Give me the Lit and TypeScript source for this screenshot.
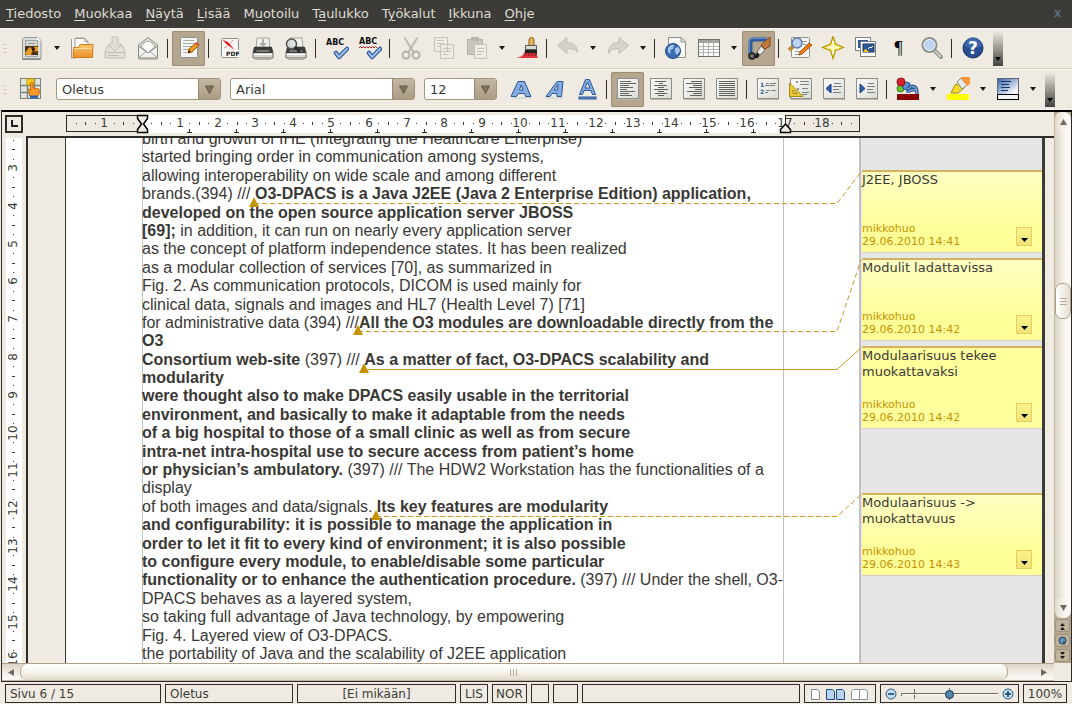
import { LitElement, html, svg, css, nothing } from "lit";
import { customElement } from "lit/decorators.js";

/* ---------- shared icon parts ---------- */
const sheet = (x: number, y: number, w: number, h: number) =>
  svg`<rect x=${x} y=${y} width=${w} height=${h} rx="1" fill="#f6f7f5" stroke="#8d918b"/>`;
const lines = (rows: number[][], color = "#7d817b") =>
  svg`${rows.map(([x, y, w]) => svg`<path d="M${x} ${y}.5h${w}" stroke=${color}/>`)}`;
const frame = svg`<rect x="1.5" y="1.5" width="21" height="20" fill="url(#paper)" stroke="#8b8f88"/><path d="M2 22.5h21" stroke="#bdb7ab"/>`;
const tick = svg`<path d="M11 17l3 4 8-8" fill="none" stroke="#2f5c9e" stroke-width="4.5" stroke-linejoin="round" stroke-linecap="round"/><path d="M11 17l3 4 8-8" fill="none" stroke="#9fc2ee" stroke-width="2" stroke-linecap="round"/>`;
const printer = svg`<path d="M6 2h12l1 11H5z" fill="#f2f3f1" stroke="#a0a39d"/><path d="M4 11h16l2 5v6H2v-6z" fill="#d5d7d3" stroke="#6d706b"/><path d="M3 11h18l1 6H2z" fill="#3b3d3a"/><path d="M6 14h12l1 2H5z" fill="#777a75"/><path d="M3 18.5h18" stroke="#fff"/><path d="M4 23.500h16" stroke="#b5afa3"/>`;
const alignIcon = (rows: number[][]) => svg`${frame}${lines(rows, "#5f635d")}`;

const icons: Record<string, unknown> = {
  newdoc: svg`<path d="M4 1.500h14l3 3v18H2.500V3z" fill="#dcdedb" stroke="#969a94"/><path d="M17 1l4 4h-4z" fill="#fff"/><rect x="5.500" y="4.500" width="12" height="16" fill="#d4d6d2" stroke="#a2a59f"/><path d="M8 7.500h7" stroke="#999"/><rect x="5" y="10" width="13" height="9" fill="#4a3214"/><path d="M5 17q5-8 6-5l1 2q2-5 6-3v4l-6 1-1 3H6z" fill="#e79a2b"/><path d="M12 15v-3l2-1 1 2-1 3z" fill="#2a1a08"/><path d="M2 23.500h19" stroke="#8d8981"/>`,
  open: svg`<path d="M1.500 3v19h4V2h8l3 3v5" fill="#f3f4f2" stroke="#9a9d97"/><path d="M5 2.500h10l3 3V13H5z" fill="#fafafa" stroke="#9a9d97"/><path d="M15 2.500v3h3" fill="none" stroke="#9a9d97"/><path d="M3 21.500l.5-10h5l1.500-3h13l-.5 13z" fill="url(#orange)" stroke="#d07c18"/><path d="M4 12.500h18" stroke="#fbd9a0"/>`,
  save: svg`<g opacity=".45"><path d="M4 10h16l2 6v6H2v-6z" fill="#d8d5ce" stroke="#8c8a84"/><path d="M2.500 16.500h19" stroke="#8c8a84"/><path d="M9 1h6v7h4l-7 7-7-7h4z" fill="#d3d1ca" stroke="#8c8a84"/><path d="M5 19.500h11" stroke="#8c8a84"/></g>`,
  mail: svg`<path d="M2.500 9L12 1.500 21.500 9v13h-19z" fill="#dfe1dd" stroke="#858983"/><path d="M5 10.500q7-11 14 0L12 17z" fill="#f8f8f7" stroke="#9fa29c"/><path d="M2.500 10l9.500 7 9.500-7v12h-19z" fill="#f0f1ef" stroke="#858983"/><path d="M3 21.500l7-6M21 21.500l-7-6" stroke="#a4a7a1"/><path d="M3 23.500h18" stroke="#c9c3b7"/>`,
  edit: svg`${sheet(3.5, 1.5, 17, 20)}${lines([[6, 4, 11], [6, 7, 12], [6, 10, 10], [6, 13, 6], [6, 16, 4]], "#a9aca6")}<path d="M11 17l1-4 7-6 3 2-7 7z" fill="#f59a1b" stroke="#9c4f04"/><path d="M11 17l1-3 2 2z" fill="#1a1a1a"/><path d="M19 7l3 2" stroke="#d9413a" stroke-width="2"/>`,
  pdf: svg`${sheet(3.5, 2.500, 17, 19)}<path d="M5 4l12 11M15 4c-3 4-6 7-9 8" stroke="#e58b8b" fill="none"/><path d="M5 4l5 2 6 7-8-5z" fill="#d8262b"/><rect x="7" y="14" width="14" height="7" fill="#fff"/><text x="8" y="20" font-size="6" font-weight="bold" fill="#111">PDF</text>`,
  print: svg`${printer}<path d="M11 3h2v4h3l-4 4-4-4h3z" fill="#a9aca6"/>`,
  preview: svg`${printer}<circle cx="7.500" cy="8" r="5" fill="#d9dedd" fill-opacity=".8" stroke="#4f524e" stroke-width="1.500"/><path d="M11 11l5 5" stroke="#2b2d2a" stroke-width="3"/>`,
  spell: svg`<text x="1" y="9" font-size="8" font-weight="bold" fill="#111">ABC</text>${tick}`,
  autospell: svg`<text x="1" y="8" font-size="8" font-weight="bold" fill="#111">ABC</text><path d="M1 12l1.500-1.500L4 12l1.500-1.500L7 12l1.500-1.500L10 12l1.500-1.500L13 12l1.500-1.500L16 12l1.500-1.500L19 12" fill="none" stroke="#e01b24"/>${tick}`,
  cut: svg`<g fill="none" stroke="#b4b1a9"><path d="M5 1.500l9 15M19 1.500l-9 15M6 1.500l9 14M18 1.500l-9 14"/><ellipse cx="7" cy="19" rx="3.500" ry="3.500" stroke-width="2"/><ellipse cx="17" cy="19" rx="3.500" ry="3.500" stroke-width="2"/></g>`,
  copy: svg`<g stroke="#c6c3bb" fill="#efece5"><path d="M2.500 1.500h13v14h-13zM8.500 8.500h13v14h-13z"/><path d="M5 4.500h7M5 7.500h7M5 10.500h3M11 12.500h8M11 15.500h8M11 18.500h6"/></g>`,
  paste: svg`<rect x="2.500" y="3.500" width="15" height="15" fill="#c9c6be" stroke="#b5b2aa"/><rect x="6" y="1" width="8" height="4" fill="#b9b6ae"/><path d="M9.500 8.500h12v14h-12z" fill="#efece5" stroke="#c6c3bb"/><path d="M12 12.500h7M12 15.500h7M12 18.500h5" stroke="#c6c3bb"/>`,
  brush: svg`<path d="M14 10V4a2.500 2.500 0 0 1 5 0v6z" fill="#e2b15a" stroke="#8c5c12"/><path d="M10.500 9.500h11v4h-11z" fill="#d9dbd7" stroke="#565955"/><path d="M10 14h12v7H9z" fill="#222"/><path d="M9 17h12l2 5H1q7-1 8-5z" fill="#e0363c"/><path d="M11 16v4M14 16v4M17 16v4M20 16v4" stroke="#661418"/>`,
  undo: svg`<path d="M1.500 9.500L11 1.500v5c7 0 11 4 10.500 10-2-3-5-4-10.500-4v5z" fill="#d4d1c9" stroke="#c4c1b8"/>`,
  redo: svg`<path d="M22.500 9.500L13 1.500v5c-7 0-11 5-10.500 11 2-4 5-5 10.500-5v5z" fill="#d8d5cd" stroke="#bfbcb3"/>`,
  globe: svg`<path d="M4.500 1.500h13l4 4v16h-17z" fill="#fafafa" stroke="#8d918b"/><path d="M17 1.500v4.500h4.500" fill="#ddd" stroke="#8d918b"/><circle cx="9" cy="15" r="7.500" fill="#3b6fb5" stroke="#1e477f"/><path d="M4 12q3-4 6-3l-1 4-3 1 1 4-3-2zM11 12l4-1 1 4-3 4-2-3z" fill="#a9c8ee"/>`,
  table: svg`<rect x="1.500" y="3.500" width="21" height="17" fill="#fff" stroke="#70746e"/><rect x="2" y="4" width="20" height="3" fill="#a3a69f"/><path d="M2 10.500h20M2 13.500h20M2 16.500h20M6.500 7v13M11.500 7v13M16.500 7v13" stroke="#b0b3ad"/>`,
  draw: svg`<path d="M20 3.500H7q-3.500 0-3.500 3.500v12" fill="none" stroke="#2d5a9c" stroke-width="4"/><path d="M20 2.500H7q-4.500 0-4.500 4.500v11" fill="none" stroke="#5f8fd0"/><circle cx="5" cy="20" r="3" fill="#666" stroke="#1c1c1c" stroke-width="1.500"/><path d="M7 22l3-6 3 2-2 4z" fill="#1b1b1b"/><path d="M10 16l4-6 4 4-5 5z" fill="#e5e7e3" stroke="#6a6d68"/><path d="M14 9l9-8v9l-5 3z" fill="#c07a42" stroke="#8c4310"/>`,
  find: svg`${sheet(3.5, 1.5, 18, 20)}${lines([[14, 5, 5], [15, 8, 3], [7, 15, 6], [7, 18, 6]], "#999d96")}<path d="M1 14l5-4" stroke="#c58a35" stroke-width="4"/><circle cx="9" cy="7" r="5" fill="#bcd4f2" stroke="#5c7ba7" stroke-width="1.500"/><path d="M11 19l1-3 9-9 3 2-10 9z" fill="#ef7d14" stroke="#a44b05"/>`,
  navigator: svg`<path d="M12 .5L14.500 8l8 3.500-8 3-2.500 8-2.500-8-8-3 8-3.500z" fill="#fbe96a" stroke="#b99402" stroke-width="1.200"/><path d="M12 5v13M6 11.500h12" stroke="#fffbd0" stroke-width="2"/>`,
  gallery: svg`<rect x="1.500" y="1.500" width="15" height="13" fill="#fff" stroke="#7f837d"/><rect x="4" y="4" width="10" height="8" fill="#2c579b"/><rect x="6.500" y="5.500" width="15" height="15" fill="#fff" stroke="#7f837d"/><rect x="9" y="8" width="11" height="8" fill="#2c579b" stroke="#15345f"/><path d="M9 16l2-3 2 1 2 2z" fill="#f5c518"/><path d="M14 13l2-2 1 1 2-2" stroke="#fff" fill="none"/>`,
  zoom: svg`<circle cx="9.500" cy="9" r="7" fill="#bdd3ef" stroke="#8e928d" stroke-width="2"/><circle cx="9.500" cy="9" r="5.500" fill="none" stroke="#eef4fb"/><path d="M15 15l6 6" stroke="#8e928d" stroke-width="4" stroke-linecap="round"/><path d="M15 15l6 6" stroke="#dcdedb" stroke-width="1.500"/>`,
  help: svg`<circle cx="12" cy="12" r="10" fill="#274f92" stroke="#173668"/><path d="M3 10a9 9 0 0 1 18 0q-9 4-18 0z" fill="#4c77b8" opacity=".6"/><text x="12" y="18" font-size="17" font-weight="bold" text-anchor="middle" fill="#fff">?</text>`,
  styles: svg`<rect x=".5" y="1.500" width="20" height="20" fill="#e3e5e1" stroke="#7c807a"/><path d="M7.500 2v20M14.500 2v20M1 8.500h20M1 15.500h20" stroke="#7c807a" stroke-width="1.500"/><rect x="7" y="2" width="7" height="6" fill="#fbd31a" stroke="#c9a400"/><path d="M9.500 18v-3l-1-3 2 1V6q1.500-2 2.500 0v5l6 1q1 4-1 7l-1 1h-6z" fill="#f79a28" stroke="#cf6a0b"/><path d="M10 18.500h8v3h-8z" fill="#2d65ac"/>`,
  bold: svg`<path d="M2 19.500l7-15h6.500l6.500 15h-5.500l-1-3h-6.500l-1.500 3zM10.500 13h3.500l-1.800-5z" fill="#85ade0" fill-rule="evenodd" stroke="#2b5797"/><path d="M3 21h19" stroke="#cfc9bd"/>`,
  italic: svg`<path d="M4 19.500l11-15h6l-1.500 15h-4.500v-3h-5l-2 3zM12 13h3.500l.5-5.500z" fill="#85ade0" fill-rule="evenodd" stroke="#2b5797"/><path d="M4 21h17" stroke="#cfc9bd"/>`,
  underline: svg`<path d="M4.500 17.500l6-15h4l6 15h-3l-1.500-4h-7l-1.500 4zM10 11h5l-2.500-6z" fill="#85ade0" fill-rule="evenodd" stroke="#2b5797"/><rect x="4" y="20" width="17" height="2" fill="#5f8fd0" stroke="#2b5797"/>`,
  left: alignIcon([[4, 4, 11], [4, 6, 16], [4, 8, 9], [4, 10, 13], [4, 12, 7], [4, 14, 15], [4, 16, 9], [4, 18, 12]]),
  center: alignIcon([[6, 4, 11], [10, 6, 4], [5, 8, 13], [9, 10, 6], [5, 12, 14], [9, 14, 6], [6, 16, 12], [9, 18, 6]]),
  right: alignIcon([[9, 4, 11], [4, 6, 16], [11, 8, 9], [7, 10, 13], [13, 12, 7], [5, 14, 15], [11, 16, 9], [8, 18, 12]]),
  justify: alignIcon([[4, 4, 16], [4, 6, 16], [4, 8, 16], [4, 10, 16], [4, 12, 16], [4, 14, 16], [4, 16, 16], [4, 18, 16]]),
  numbering: svg`${frame}<text x="4" y="10" font-size="6" font-weight="bold" fill="#2a568f">1</text><text x="4" y="17" font-size="6" font-weight="bold" fill="#2a568f">2</text>${lines([[10, 6, 3], [14, 6, 6], [9, 8, 10], [10, 13, 4], [15, 13, 5], [9, 15, 3]])}`,
  bullets: svg`${frame}<g fill="#8d918b"><rect x="7" y="4" width="2" height="2"/><rect x="8" y="11" width="2" height="2"/></g>${lines([[11, 4, 9], [11, 7, 9], [13, 11, 6], [13, 15, 7], [13, 17, 5]])}<path d="M.5 6v13.500H14z" fill="#e7c93a" stroke="#a98807"/><path d="M4 13v3.500h4z" fill="#f6efdc" stroke="#a98807"/>`,
  outdent: svg`${frame}<path d="M9 7v9l-5-4.500z" fill="#2a5ea8" stroke="#173f78"/>${lines([[12, 6, 7], [11, 9, 9], [11, 12, 6], [11, 15, 8]])}`,
  indent: svg`${frame}<path d="M5 7v9l5-4.500z" fill="#2a5ea8" stroke="#173f78"/>${lines([[13, 6, 6], [12, 9, 8], [12, 12, 6], [12, 15, 8]])}`,
  fontcolor: svg`<circle cx="4.500" cy="11.500" r="3.500" fill="#66c429" stroke="#3c7d12"/><circle cx="10.500" cy="9" r="4" fill="#5b8dd0" stroke="#214f8f"/><circle cx="5" cy="5" r="4" fill="#dd2027" stroke="#8c0d12"/><path d="M12 12q3-4 7-2 2 1 2 7M20 13q-8-1-8 3" fill="none" stroke="#2b5797" stroke-width="3.500"/><path d="M12 12q3-4 7-2 2 1 2 7M20 13q-8-1-8 3" fill="none" stroke="#a9c6ec"/><rect x="1" y="17" width="22" height="6" fill="#880000"/>`,
  highlight: svg`<path d="M5 16l4-8 6-2 3 5-6 5z" fill="#f3da26" stroke="#a88f04"/><path d="M11 5l4-4 6 7-5 4z" fill="#e8e9e6" stroke="#868983"/><path d="M15 1V0h9v7l-3 2z" fill="#f8973a"/><rect x="1" y="17" width="22" height="6" fill="#ffff00"/>`,
  background: svg`<rect x="1.500" y="1.500" width="21" height="16" fill="url(#bluefade)" stroke="#5f6976"/>${lines([[5, 4, 10], [5, 7, 8], [5, 10, 9], [5, 13, 7]], "#17396f")}<rect x="1.500" y="17.500" width="21" height="5" fill="#f4f4f2" stroke="#000"/>`,
};

type Item = string;
const standardBar: Item[] = ["newdoc:Uusi", ">", "open:Avaa", "save:Tallenna", "mail:Sähköposti", "|", "edit:Muokkaa:on", "|", "pdf:Vie PDF", "print:Tulosta", "preview:Esikatselu", "|", "spell:Oikoluku", "autospell:Automaattinen oikoluku", "|", "cut:Leikkaa", "copy:Kopioi", "paste:Liitä", ">", "brush:Muotoilusivellin", "|", "undo:Kumoa", ">", "redo:Toista", ">", "|", "globe:Hyperlinkki", "table:Taulukko", ">", "draw:Piirto:on", "|", "find:Etsi", "navigator:Rakenneselain", "gallery:Galleria", "pilcrow:Ohjausmerkit", "zoom:Zoomaus", "|", "help:Ohje"];
const formatBar: Item[] = ["bold:Lihavointi", "italic:Kursivointi", "underline:Alleviivaus", "|", "left:Vasen:on", "center:Keskitä", "right:Oikea", "justify:Tasaa", "|", "numbering:Numerointi", "bullets:Luettelomerkit", "outdent:Pienennä sisennystä", "indent:Suurenna sisennystä", "|", "fontcolor:Fontin väri", ">", "highlight:Korostus", ">", "background:Taustaväri", ">"];

const B = (t: string) => html`<b>${t}</b>`;
const paragraphs: unknown[] = [
  "birth and growth of IHE (Integrating the Healthcare Enterprise)",
  "started bringing order in communication among systems,",
  "allowing interoperability on wide scale and among different",
  html`brands.(394) /// ${B("O3-DPACS is a Java J2EE (Java 2 Enterprise Edition) application,")}`,
  B("developed on the open source application server JBOSS"),
  html`${B("[69];")} in addition, it can run on nearly every application server`,
  "as the concept of platform independence states. It has been realized",
  "as a modular collection of services [70], as summarized in",
  "Fig. 2. As communication protocols, DICOM is used mainly for",
  "clinical data, signals and images and HL7 (Health Level 7) [71]",
  html`for administrative data (394) ///${B("All the O3 modules are downloadable directly from the O3")}`,
  html`${B("Consortium web-site")} (397) /// ${B("As a matter of fact, O3-DPACS scalability and modularity")}`,
  B("were thought also to make DPACS easily usable in the territorial"),
  B("environment, and basically to make it adaptable from the needs"),
  B("of a big hospital to those of a small clinic as well as from secure"),
  B("intra-net intra-hospital use to secure access from patient’s home"),
  html`${B("or physician’s ambulatory.")} (397) /// The HDW2 Workstation has the functionalities of a display`,
  html`of both images and data/signals. ${B("Its key features are modularity")}`,
  B("and configurability: it is possible to manage the application in"),
  B("order to let it fit to every kind of environment; it is also possible"),
  B("to configure every module, to enable/disable some particular"),
  html`${B("functionality or to enhance the authentication procedure.")} (397) /// Under the shell, O3-DPACS behaves as a layered system,`,
  "so taking full advantage of Java technology, by empowering",
  "Fig. 4. Layered view of O3-DPACS.",
  "the portability of Java and the scalability of J2EE application",
];

const notes = [
  { text: "J2EE, JBOSS", time: "29.06.2010 14:41", fade: true, far: false },
  { text: "Modulit ladattavissa", time: "29.06.2010 14:42", fade: true, far: false },
  { text: "Modulaarisuus tekee muokattavaksi", time: "29.06.2010 14:42", fade: false, far: false },
  { text: "Modulaarisuus -> muokattavuus", time: "29.06.2010 14:43", fade: true, far: true },
];

/* comment anchors in canvas coordinates: marker x, marker base y, note top y */
const anchors = [
  { x: 226, base: 69, note: 34, dashed: true },
  { x: 330, base: 197, note: 122, dashed: true },
  { x: 336, base: 235, note: 210, dashed: false },
  { x: 348, base: 382, note: 357, dashed: true },
];

const CM = 37.8;
const LEFT_MARGIN = 116;

@customElement("app-root")
export class AppRoot extends LitElement {
  static styles = css`
    :host { display: grid; grid-template-rows: 28px 41px 41px 1fr 22px; height: 100vh; overflow: hidden; background: #efebe3; color: #3c3b37; font: 13px/16px "DejaVu Sans", sans-serif; }
    * { box-sizing: border-box; }
    button, select { font: inherit; color: inherit; margin: 0; }
    button { border: 0; padding: 0; background: none; display: grid; place-items: center; }
    svg text { font-family: "DejaVu Sans", sans-serif; }
    .defs { position: absolute; width: 0; height: 0; }

    .menubar { display: flex; align-items: center; gap: 1px; background: #3c3b37; color: #dfdbd2; padding-right: 10px; }
    .menubar button { padding: 0 6px; display: block; white-space: nowrap; }
    .menubar .close { margin-left: auto; padding: 0; }
    .menubar u { text-underline-offset: 2px; }

    .toolbar { display: flex; align-items: center; border-bottom: 1px solid #dccfb9; box-shadow: inset 0 1px #f7f4ef; }
    .toolbar.format { border-bottom-color: #f7f4ef; }
    .grip { width: 4px; height: 9px; margin: 0 8px 0 3px; background: repeating-linear-gradient(#d5cfc3 0 1px, transparent 1px 4px); }
    .tool { width: 33px; height: 35px; flex: none; }
    .tool.on { background: #b5a68f; box-shadow: inset 0 0 0 1px #9d8d75; border-radius: 2px; }
    .tool svg { width: 24px; height: 24px; display: block; }
    .pilcrow { font: 18px/24px "Liberation Serif", serif; color: #000; -webkit-text-stroke: 0; }
    .drop { width: 17px; height: 35px; flex: none; }
    .sep { width: 2px; height: 19px; margin: 0 3px; flex: none; border-left: 1px solid #2d2c29; }
    .more { width: 10px; height: 35px; margin-left: 4px; align-content: end; padding-bottom: 5px; background: linear-gradient(#efebe3, #45433e); flex: none; }
    .combo { display: flex; height: 22px; border: 1px solid #a3947c; border-radius: 3px; background: #fff; margin-left: 9px; position: relative; flex: none; }
    .combo.style { width: 165px; margin-left: 8px; }
    .combo.font { width: 185px; }
    .combo.size { width: 73px; margin-right: 7px; }
    .combo select { appearance: none; border: 0; background: none; flex: 1; min-width: 0; padding: 1px 24px 0 5px; outline: 0; }
    .combo .cap { position: absolute; right: 0; top: 0; bottom: 0; width: 22px; display: grid; place-items: center; background: linear-gradient(#c4b7a3, #ab9c84); border-left: 1px solid #97876f; pointer-events: none; }

    .work { display: grid; grid-template: 24px minmax(0, 1fr) 18px / 24px minmax(0, 1fr) 17px; border: 1px solid #2b2a27; border-top: 2px solid #000; margin-left: 1px; min-height: 0; }
    .corner { width: 18px; height: 18px; margin: 3px; border: 2px solid #2e2c28; }
    .corner svg { display: block; }
    .hruler, .vruler { overflow: hidden; }
    .hruler svg, .vruler svg { display: block; width: 100%; height: 100%; }
    .vruler { background: #fff; margin: 2px 4px 0; }

    .canvas { display: flex; position: relative; border-left: 2px solid #2e2c28; border-top: 2px solid #2e2c28; overflow: hidden; padding: 0 9px 0 37px; min-height: 0; }
    .page { flex: none; background: #fff; border-left: 1px solid #3c3b37; border-right: 2px solid #c1c1c1; padding: 0 75px 0 76px; }
    .column { display: flow-root; width: 642px; height: 100%; box-shadow: inset 1px 0 #c0c0c0, inset -1px 0 #c0c0c0; color: #3a3834; font: 16px/1.15 "Liberation Sans", Arial, sans-serif; }
    .text { margin-top: -8px; }
    .text p { margin: 0; }
    .links { position: absolute; left: 0; top: 0; width: 100%; height: 100%; pointer-events: none; }

    .notes { flex: 1; display: flex; flex-direction: column; gap: 6px; background: #e6e6e6; border-right: 3px solid #3c3b37; padding: 32px 0 0 1px; min-width: 0; }
    .note { height: 82px; display: grid; grid-template: 1fr auto / 1fr auto; flex: none; background: #ffff9e; border-top: 2px solid #d1b45c; box-shadow: 0 1px #cfcfcb; padding-bottom: 4px; }
    .note.fade { background: linear-gradient(#ffffc4, #ffff9a 70%); }
    .note.far { margin-top: 59px; }
    .note p { margin: 0; grid-column: 1 / 3; width: 160px; }
    .meta { font-size: 11px; line-height: 13px; color: #c69200; }
    .note button { width: 16px; height: 19px; margin: 5px 10px 0 0; border: 1px solid #e3cd5e; background: linear-gradient(#fbf38c, #f0e27a); align-content: end; padding-bottom: 3px; }

    .vscroll { grid-row: 1 / 3; grid-column: 3; display: grid; grid-template-rows: 20px 1fr 20px 15px 15px 15px; background: #b5a68f; }
    .vtrack { background: linear-gradient(90deg, #dcd3c5, #faf8f4 70%); border-left: 1px solid #c4b59d; display: flex; flex-direction: column; padding-top: 151px; }
    .vend { background: linear-gradient(90deg, #e3dbce, #fbfaf7 70%); border-left: 1px solid #c4b59d; }
    .vend.top { border-radius: 7px 7px 0 0; }
    .vend.bottom { border-radius: 0 0 7px 7px; }
    .vthumb { height: 36px; border: 1px solid #b09f86; border-radius: 7px; background: linear-gradient(90deg, #fff, #e6dfd2); display: grid; place-items: center; }
    .jump { margin: 1px; border: 1px solid #a08f77; border-radius: 3px; background: #c1b49f; }
    .hscroll { grid-row: 3; grid-column: 1 / 3; display: flex; background: linear-gradient(#ddd4c6, #f9f7f2 80%); border-top: 1px solid #b09f86; border-bottom: 1px solid #c4b59d; }
    .hscroll button { width: 18px; }
    .hscroll .end { width: 46px; padding-left: 26px; }
    .hthumb { flex: 1; border: 1px solid #b5a68f; border-width: 0 1px; border-radius: 7px; background: linear-gradient(#fff, #f8f5ef 50%, #e3dacb); display: grid; place-items: center; }

    .status { display: grid; grid-template-columns: 156px 128px 159px 28px 35px 18px 25px 1fr 72px 139px 44px; gap: 4px; padding: 2px 5px 1px; font-size: 12px; line-height: 16px; }
    .status > * { border: 1px solid #2e2c28; padding: 1px 4px 0; white-space: nowrap; }
    .status .mid { text-align: center; padding: 1px 0 0; }
    .views, .zoomer { display: flex; align-items: center; justify-content: center; }
    .zoomer svg { flex: none; }
    .slider { position: relative; width: 98px; height: 16px; margin: 0 3px 0 4px; display: block; flex: none; }
    .slider svg { position: absolute; left: 0; top: 0; }
    .slider input { appearance: none; position: relative; display: block; width: 98px; height: 16px; margin: 0; background: none; }
    .slider input::-webkit-slider-thumb { appearance: none; width: 9px; height: 9px; border-radius: 50%; background: #5488ad; border: 1px solid #16324a; }
  `;

  private arrow(w = 7, color = "#1b1a18") {
    return html`<svg width=${w} height="4" viewBox="0 0 7 4" preserveAspectRatio="none"><path d="M0 0h7L3.500 4z" fill=${color} /></svg>`;
  }

  private item(entry: Item) {
    if (entry === "|") return html`<span class="sep"></span>`;
    if (entry === ">") return html`<button class="drop" aria-label="Lisää valintoja">${this.arrow(6)}</button>`;
    const [name, label, on] = entry.split(":");
    return html`<button class="tool ${on ?? ""}" aria-label=${label}>
      ${name === "pilcrow" ? html`<span class="pilcrow">¶</span>` : html`<svg viewBox="0 0 24 24">${icons[name]}</svg>`}
    </button>`;
  }

  private combo(kind: string, label: string, value: string) {
    return html`<span class="combo ${kind}"><select aria-label=${label}><option>${value}</option></select>
      <span class="cap"><svg width="9" height="9" viewBox="0 0 9 9"><path d="M.5 1h8L4.500 8.500z" fill="#7d725f" stroke="#665c4b" /></svg></span></span>`;
  }

  private horizontalRuler() {
    const quarters = Array.from({ length: 84 }, (_, i) => i - 7).filter((q) => q < 76 && q !== 0);
    return svg`
      <rect x="40.500" y="3.500" width="793" height="16" fill="#efebe3" stroke="#2e2c28"/>
      <rect x="116" y="3" width="643" height="18" fill="#fff"/>
      <path d="M759.500 3v17" stroke="#2e2c28"/>
      ${quarters.map((q) => {
        const x = Math.round(LEFT_MARGIN + (q * CM) / 4);
        if (q % 4 === 0) return svg`<text x=${x} y="15" font-size="12" text-anchor="middle" fill="#3c3b37">${Math.abs(q / 4)}</text>`;
        return q % 2 === 0 ? svg`<rect x=${x} y="10" width="1" height="3" fill="#3c3b37"/>` : svg`<rect x=${x} y="11" width="1" height="1" fill="#3c3b37"/>`;
      })}
      ${Array.from({ length: 13 }, (_, i) => 116 + 47 * (i + 1)).map((x) => svg`<path d="M${x - 2} 20.500h5M${x}.5 17v3" stroke="#2e2c28"/>`)}
      <path d="M111.500 3.500h10v3l-4 5.500 4 5.500v3h-10v-3l4-5.500-4-5.500z" fill="#efebe3" stroke="#000" stroke-width="1.500"/>
      <path d="M754.500 20.500v-3l5-5.500 5 5.500v3z" fill="#efebe3" stroke="#000" stroke-width="1.500"/>`;
  }

  private verticalRuler() {
    const quarters = Array.from({ length: 60 }, (_, i) => i + 9);
    return svg`${quarters.map((q) => {
      const y = Math.round(30 + ((q - 12) * CM) / 4);
      if (q % 4 === 0) return svg`<text transform="translate(11 ${y}) rotate(-90)" font-size="12" text-anchor="middle" fill="#3c3b37">${q / 4}</text>`;
      return q % 2 === 0 ? svg`<rect x="6" y=${y} width="3" height="1" fill="#3c3b37"/>` : svg`<rect x="7" y=${y} width="1" height="1" fill="#3c3b37"/>`;
    })}`;
  }

  private menu(before: string, key: string, after: string) {
    return html`<button>${before}<u>${key}</u>${after}</button>`;
  }

  render() {
    return html`
      <nav class="menubar">
        ${this.menu("", "T", "iedosto")}${this.menu("", "M", "uokkaa")}${this.menu("", "N", "äytä")}${this.menu("", "L", "isää")}${this.menu("M", "u", "otoilu")}${this.menu("T", "a", "ulukko")}${this.menu("T", "y", "ökalut")}${this.menu("", "I", "kkuna")}${this.menu("", "O", "hje")}
        <button class="close" aria-label="Sulje"><svg width="9" height="9" viewBox="0 0 9 9"><path d="M1 1h2l1.500 2L6 1h2L5.500 4.500 8 8H6L4.500 6 3 8H1l2.500-3.500z" fill="#5d6f80" /></svg></button>
      </nav>
      <div class="toolbar"><span class="grip"></span>${standardBar.map((i) => this.item(i))}<button class="more" aria-label="Lisää">${this.arrow(6, "#000")}</button></div>
      <div class="toolbar format"><span class="grip"></span>${this.item("styles:Tyylit")}
        ${this.combo("style", "Tyyli", "Oletus")}${this.combo("font", "Fontti", "Arial")}${this.combo("size", "Koko", "12")}
        ${formatBar.map((i) => this.item(i))}<button class="more" aria-label="Lisää">${this.arrow(6, "#000")}</button></div>

      <main class="work">
        <div class="corner"><svg width="14" height="14" viewBox="0 0 14 14"><path d="M5 3v6h6" fill="none" stroke="#1b1a18" stroke-width="2" /></svg></div>
        <div class="hruler"><svg>${this.horizontalRuler()}</svg></div>
        <div class="vscroll">
          <button class="vend top" aria-label="Ylös"><svg width="7" height="6" viewBox="0 0 7 6"><path d="M0 6h7L3.500 0z" fill="#6f6a60" /></svg></button>
          <div class="vtrack"><div class="vthumb"><svg width="7" height="8" viewBox="0 0 7 8"><path d="M0 1.500h7M0 4.500h7M0 7.500h7" stroke="#b8aa94" /></svg></div></div>
          <button class="vend bottom" aria-label="Alas"><svg width="7" height="6" viewBox="0 0 7 6"><path d="M0 0h7L3.500 6z" fill="#6f6a60" /></svg></button>
          <button class="jump" aria-label="Edellinen sivu"><svg width="7" height="8" viewBox="0 0 7 8"><path d="M1 4h5L3.500 1zM1 8h5L3.500 5z" fill="#1b1a18" /></svg></button>
          <button class="jump" aria-label="Siirtyminen"><svg width="9" height="9" viewBox="0 0 9 9"><circle cx="4.500" cy="4.500" r="3.500" fill="#5f93b8" stroke="#1f4058" /><path d="M6 5v4" stroke="#1f4058" /></svg></button>
          <button class="jump" aria-label="Seuraava sivu"><svg width="7" height="8" viewBox="0 0 7 8"><path d="M1 0h5L3.500 3zM1 4h5L3.500 7z" fill="#1b1a18" /></svg></button>
        </div>
        <div class="vruler"><svg>${this.verticalRuler()}</svg></div>
        <div class="canvas">
          <article class="page"><div class="column"><div class="text">${paragraphs.map((p) => html`<p>${p}</p>`)}</div></div></article>
          <aside class="notes">
            ${notes.map((n) => html`<section class="note ${n.fade ? "fade" : ""} ${n.far ? "far" : ""}">
              <p>${n.text}</p>
              <div class="meta">mikkohuo<br />${n.time}</div>
              <button aria-label="Huomautuksen toiminnot">${this.arrow(7, "#000")}</button>
            </section>`)}
          </aside>
          <svg class="links">
            ${anchors.map((a) => svg`<path d="M${a.x - 5} ${a.base}l5-10 5 10z" fill="#c69200"/>
              <path d="M${a.x} ${a.base - 3.5}H809L833 ${a.note}" fill="none" stroke="#c99c1c" stroke-dasharray=${a.dashed ? "5 3" : nothing}/>`)}
          </svg>
        </div>
        <div class="hscroll">
          <button aria-label="Vasemmalle"><svg width="6" height="7" viewBox="0 0 6 7"><path d="M6 0v7L0 3.500z" fill="#6f6a60" /></svg></button>
          <div class="hthumb"><svg width="8" height="7" viewBox="0 0 8 7"><path d="M.5 0v7M3.500 0v7M6.500 0v7" stroke="#b8aa94" /></svg></div>
          <button class="end" aria-label="Oikealle"><svg width="6" height="7" viewBox="0 0 6 7"><path d="M0 0v7L6 3.500z" fill="#6f6a60" /></svg></button>
        </div>
      </main>

      <footer class="status">
        <span>Sivu 6 / 15</span><span>Oletus</span><span class="mid">[Ei mikään]</span><span class="mid">LIS</span><span class="mid">NOR</span><span></span><span></span><span></span>
        <span class="views"><svg width="58" height="13" viewBox="0 0 58 13">
          <path d="M.5 1.500h6l2 2v8h-8z" fill="#fff" stroke="#7c8791" /><path d="M15.500 1.500h6l2 2v8h-8zM25.500 1.500h6l2 2v8h-8z" fill="#b9d2ee" stroke="#1d4c86" /><path d="M40.500 3.500l2-2h6v10h-8zM48.500 1.500h6l2 2v8h-8z" fill="#fff" stroke="#8b949c" /></svg></span>
        <span class="zoomer">
          <svg width="12" height="12" viewBox="0 0 12 12"><circle cx="6" cy="6" r="5" fill="#c4def0" stroke="#2c5a80" /><path d="M3 6h6" stroke="#123a5a" stroke-width="1.500" /></svg>
          <label class="slider"><svg width="98" height="16" viewBox="0 0 98 16"><path d="M.5 10V7.500H97M13.500 3v10M48.500 2v12" fill="none" stroke="#6d6a63" /><path d="M1 8.500h96" stroke="#fff" /></svg><input type="range" aria-label="Zoomaus" min="0" max="100" value="49" /></label>
          <svg width="12" height="12" viewBox="0 0 12 12"><circle cx="6" cy="6" r="5" fill="#c4def0" stroke="#2c5a80" /><path d="M3 6h6M6 3v6" stroke="#123a5a" stroke-width="1.500" /></svg>
        </span>
        <span class="mid">100%</span>
      </footer>
      <svg class="defs" aria-hidden="true"><defs>
        <linearGradient id="paper" x1="0" y1="0" x2="1" y2="1"><stop offset="0" stop-color="#fdfdfc" /><stop offset="1" stop-color="#d9dbd6" /></linearGradient>
        <linearGradient id="orange" x1="0" y1="0" x2="0" y2="1"><stop offset="0" stop-color="#fbc56f" /><stop offset="1" stop-color="#ea8f26" /></linearGradient>
        <linearGradient id="bluefade" x1="0" y1="0" x2="1" y2="1"><stop offset="0" stop-color="#2f62ab" /><stop offset=".8" stop-color="#f2f4f6" /></linearGradient>
      </defs></svg>
    `;
  }
}
